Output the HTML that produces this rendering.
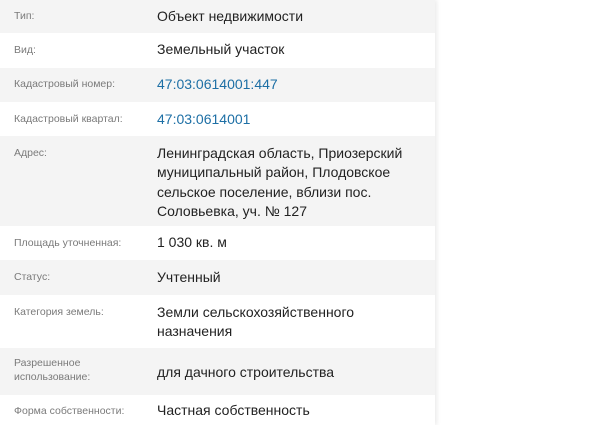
<!DOCTYPE html>
<html><head><meta charset="utf-8"><style>
body{margin:0;width:600px;height:425px;background:#fff;overflow:hidden;font-family:"Segoe UI","Liberation Sans","DejaVu Sans",sans-serif;position:relative}
.panel{position:absolute;left:0;top:0;width:435px;height:425px;box-shadow:2px 0 4px rgba(0,0,0,.08)}
.r{position:absolute;left:0;width:435px}
.g{background:#f4f4f4}
.l{position:absolute;left:14px;font-size:10.5px;color:#7a7a7a;line-height:14px}
.v{position:absolute;left:157px;font-size:14px;color:#222;line-height:19.3px;width:258px}
a{color:#1d6fa5;text-decoration:none}
</style></head><body>
<div class="panel">
<div class="r g" style="top:0;height:33px"><div class="l" style="top:9px">Тип:</div><div class="v" style="top:7px">Объект недвижимости</div></div>
<div class="r" style="top:33px;height:35px"><div class="l" style="top:10px">Вид:</div><div class="v" style="top:7px">Земельный участок</div></div>
<div class="r g" style="top:68px;height:34px"><div class="l" style="top:9px">Кадастровый номер:</div><div class="v" style="top:7px"><a>47:03:0614001:447</a></div></div>
<div class="r" style="top:102px;height:34px"><div class="l" style="top:10px">Кадастровый квартал:</div><div class="v" style="top:8px"><a>47:03:0614001</a></div></div>
<div class="r g" style="top:136px;height:90px"><div class="l" style="top:10px">Адрес:</div><div class="v" style="top:8px">Ленинградская область, Приозерский муниципальный район, Плодовское сельское поселение, вблизи пос. Соловьевка, уч. № 127</div></div>
<div class="r" style="top:226px;height:34px"><div class="l" style="top:10px">Площадь уточненная:</div><div class="v" style="top:7px">1 030 кв. м</div></div>
<div class="r g" style="top:260px;height:35px"><div class="l" style="top:10px">Статус:</div><div class="v" style="top:8px">Учтенный</div></div>
<div class="r" style="top:295px;height:53px"><div class="l" style="top:10px">Категория земель:</div><div class="v" style="top:8px">Земли сельскохозяйственного<br>назначения</div></div>
<div class="r g" style="top:348px;height:47px"><div class="l" style="top:8px">Разрешенное<br>использование:</div><div class="v" style="top:15px">для дачного строительства</div></div>
<div class="r" style="top:395px;height:30px"><div class="l" style="top:9px">Форма собственности:</div><div class="v" style="top:6px">Частная собственность</div></div>
</div>
</body></html>
